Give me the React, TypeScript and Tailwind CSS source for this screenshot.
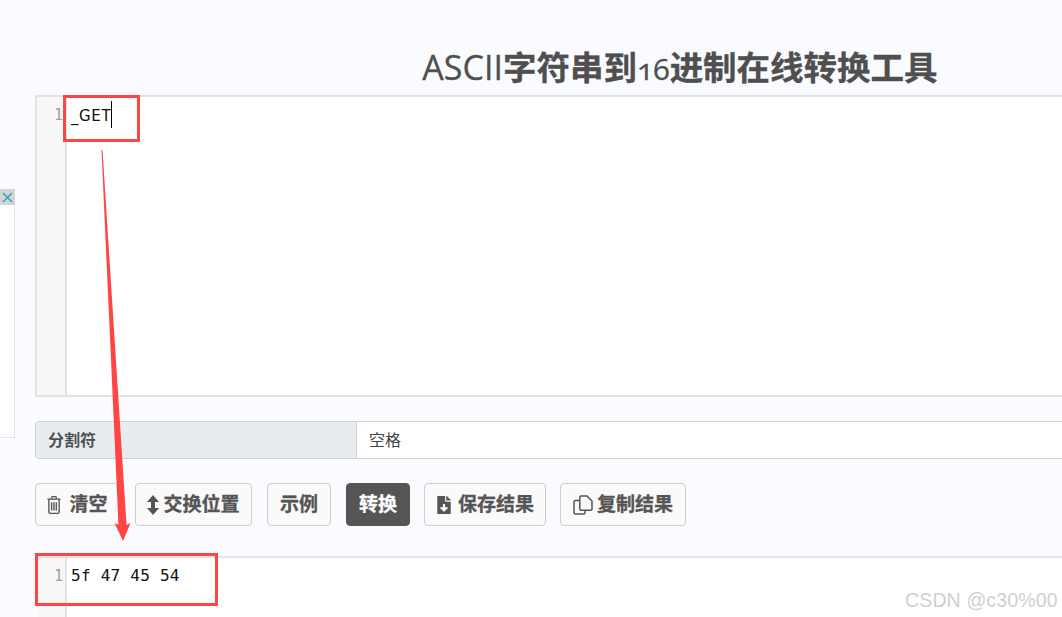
import { FaFileDownload } from "react-icons/fa";
import type { ReactNode } from "react";

const cjk = "font-['Liberation_Sans','Noto_Sans_CJK_SC',sans-serif]";

function Btn({ children, icon, dark, w }: { children: ReactNode; icon?: ReactNode; dark?: boolean; w: string }) {
  return (
    <button
      className={`${w} h-[43px] flex items-center justify-center rounded-[4px] border text-[19px] leading-none font-bold [-webkit-text-stroke:0.3px] ${
        dark ? "bg-[#555555] border-[#555555] text-white" : "bg-[#fafafa] border-[#cccccc] text-[#555555]"
      }`}
    >
      {icon}
      <span>{children}</span>
    </button>
  );
}

function Gutter({ children }: { children: string }) {
  return (
    <div className="w-[30px] shrink-0 self-stretch bg-[#f7f7f7] border-r-2 border-[#e3e3e3] text-right pr-[2px] pt-[8px] text-[15px] leading-[20px] text-[#a0a0a0] font-['DejaVu_Sans_Mono',monospace]">
      {children}
    </div>
  );
}

function TrashIcon() {
  return (
    <svg className="mr-[8px] ml-[1px]" width="14" height="20" viewBox="0 0 15 20" fill="none" stroke="#555555" strokeWidth="1.5">
      <path d="M5 3V2a1 1 0 0 1 1-1h3a1 1 0 0 1 1 1v1" />
      <path d="M0.5 3.75h14" />
      <path d="M2 4v13.5a1.5 1.5 0 0 0 1.5 1.5h8a1.5 1.5 0 0 0 1.5-1.5V4" />
      <path d="M5 7v9M7.5 7v9M10 7v9" />
    </svg>
  );
}

function SwapIcon() {
  return (
    <svg className="mr-[4px]" width="12" height="20" viewBox="0 0 12 20" fill="#555555">
      <polygon points="6,0 12,7 8,7 8,13 12,13 6,20 0,13 4,13 4,7 0,7" />
    </svg>
  );
}

function CopyIcon() {
  return (
    <svg className="mr-[4px]" width="20" height="20" viewBox="0 0 20 20" fill="none" stroke="#555555" strokeWidth="1.5">
      <path d="M8 1h6l5 5v8a1.2 1.2 0 0 1-1.2 1.2H8a1.2 1.2 0 0 1-1.2-1.2V2.2A1.2 1.2 0 0 1 8 1z" />
      <path d="M6 5.5H2.5A1.5 1.5 0 0 0 1 7v10.5A1.5 1.5 0 0 0 2.5 19h8a1.5 1.5 0 0 0 1.5-1.5V15.5" />
    </svg>
  );
}

export default function App() {
  return (
    <div className={`relative w-[1062px] h-[617px] overflow-hidden bg-[#fafbfe] ${cjk}`}>
      <div className="absolute left-0 top-[189px] w-[15px]">
        <div className="w-[15px] h-[16px] bg-[#d4d4d4] flex items-center justify-center">
          <svg width="11" height="11" viewBox="0 0 11 11" fill="none" stroke="#29a9c9" strokeWidth="1.6">
            <path d="M1 1 L10 10 M10 1 L1 10" />
          </svg>
        </div>
        <div className="h-[233px] bg-white border-r border-b border-[#e3e3e3]" />
      </div>

      <div className="w-[1290px] ml-[35px] flex flex-col">
        <h1 className="h-[95px] pt-[44px] text-center text-[33.5px] leading-[46px] font-bold text-[#4f4f4f] whitespace-nowrap [-webkit-text-stroke:0.3px]">
          <span className="font-normal font-['Open_Sans',sans-serif] text-[34px]">ASCII</span>
          字符串到
          <span className="font-normal font-['Open_Sans',sans-serif] oldstyle-nums text-[30px]">16</span>
          进制在线转换工具
        </h1>

        <div className="h-[302px] flex bg-white border-2 border-[#e3e3e3]">
          <Gutter>1</Gutter>
          <div className="pl-[4px] pt-[8px] text-[15px] leading-[22px] tracking-[0.6px] text-[#111111] font-['DejaVu_Sans',sans-serif] flex items-start">
            <span>_GET</span>
            <span className="w-px h-[27px] bg-black -mt-[4px]" />
          </div>
        </div>

        <div className="mt-[24px] h-[38px] flex text-[16px] leading-none">
          <div className="w-[322px] bg-[#e9ecef] border border-[#ced4da] rounded-l-[4px] flex items-center pl-[12px] pt-[1px] text-[#495057] font-bold">
            分割符
          </div>
          <div className="flex-1 -ml-px bg-white border border-[#ced4da] flex items-center pl-[12px] pt-[1px] text-[#444444]">
            空格
          </div>
        </div>

        <div className="mt-[24px] flex">
          <Btn w="w-[84px] mr-[16px]" icon={<TrashIcon />}>清空</Btn>
          <Btn w="w-[117px] mr-[15px]" icon={<SwapIcon />}>交换位置</Btn>
          <Btn w="w-[64px] mr-[15px]">示例</Btn>
          <Btn w="w-[64px] mr-[14px]" dark>转换</Btn>
          <Btn w="w-[122px] mr-[14px]" icon={<FaFileDownload className="text-[18px] mr-[5px] -ml-[1px]" />}>保存结果</Btn>
          <Btn w="w-[126px]" icon={<CopyIcon />}>复制结果</Btn>
        </div>

        <div className="mt-[30px] h-[100px] flex bg-white border-t-2 border-[#e3e3e3]">
          <div className="ml-[2px] flex w-full">
            <Gutter>1</Gutter>
            <div className="pl-[4px] pt-[7px] text-[16px] leading-[22px] tracking-[0.25px] whitespace-pre text-[#111111] font-['DejaVu_Sans_Mono',monospace]">
              5f 47 45 54
            </div>
          </div>
        </div>
      </div>

      <div className="absolute left-[63px] top-[95px] w-[77px] h-[47px] border-[3px] border-[#ff4444]" />
      <div className="absolute left-[35px] top-[553px] w-[183px] h-[53px] border-[3px] border-[#ff4444]" />

      <svg className="absolute left-0 top-0 pointer-events-none" width="1062" height="617" viewBox="0 0 1062 617">
        <path d="M101.5 150 L102.5 150 L126.5 525 L130.5 523 L123 541 L114.5 523 L118.5 525 Z" fill="#ff4444" />
      </svg>

      <div className="absolute left-[905px] top-[588px] text-[19.5px] leading-[24px] tracking-[0.15px] text-[#d0d0d0] font-['Liberation_Sans',sans-serif] whitespace-nowrap">
        CSDN @c30%00
      </div>
    </div>
  );
}
